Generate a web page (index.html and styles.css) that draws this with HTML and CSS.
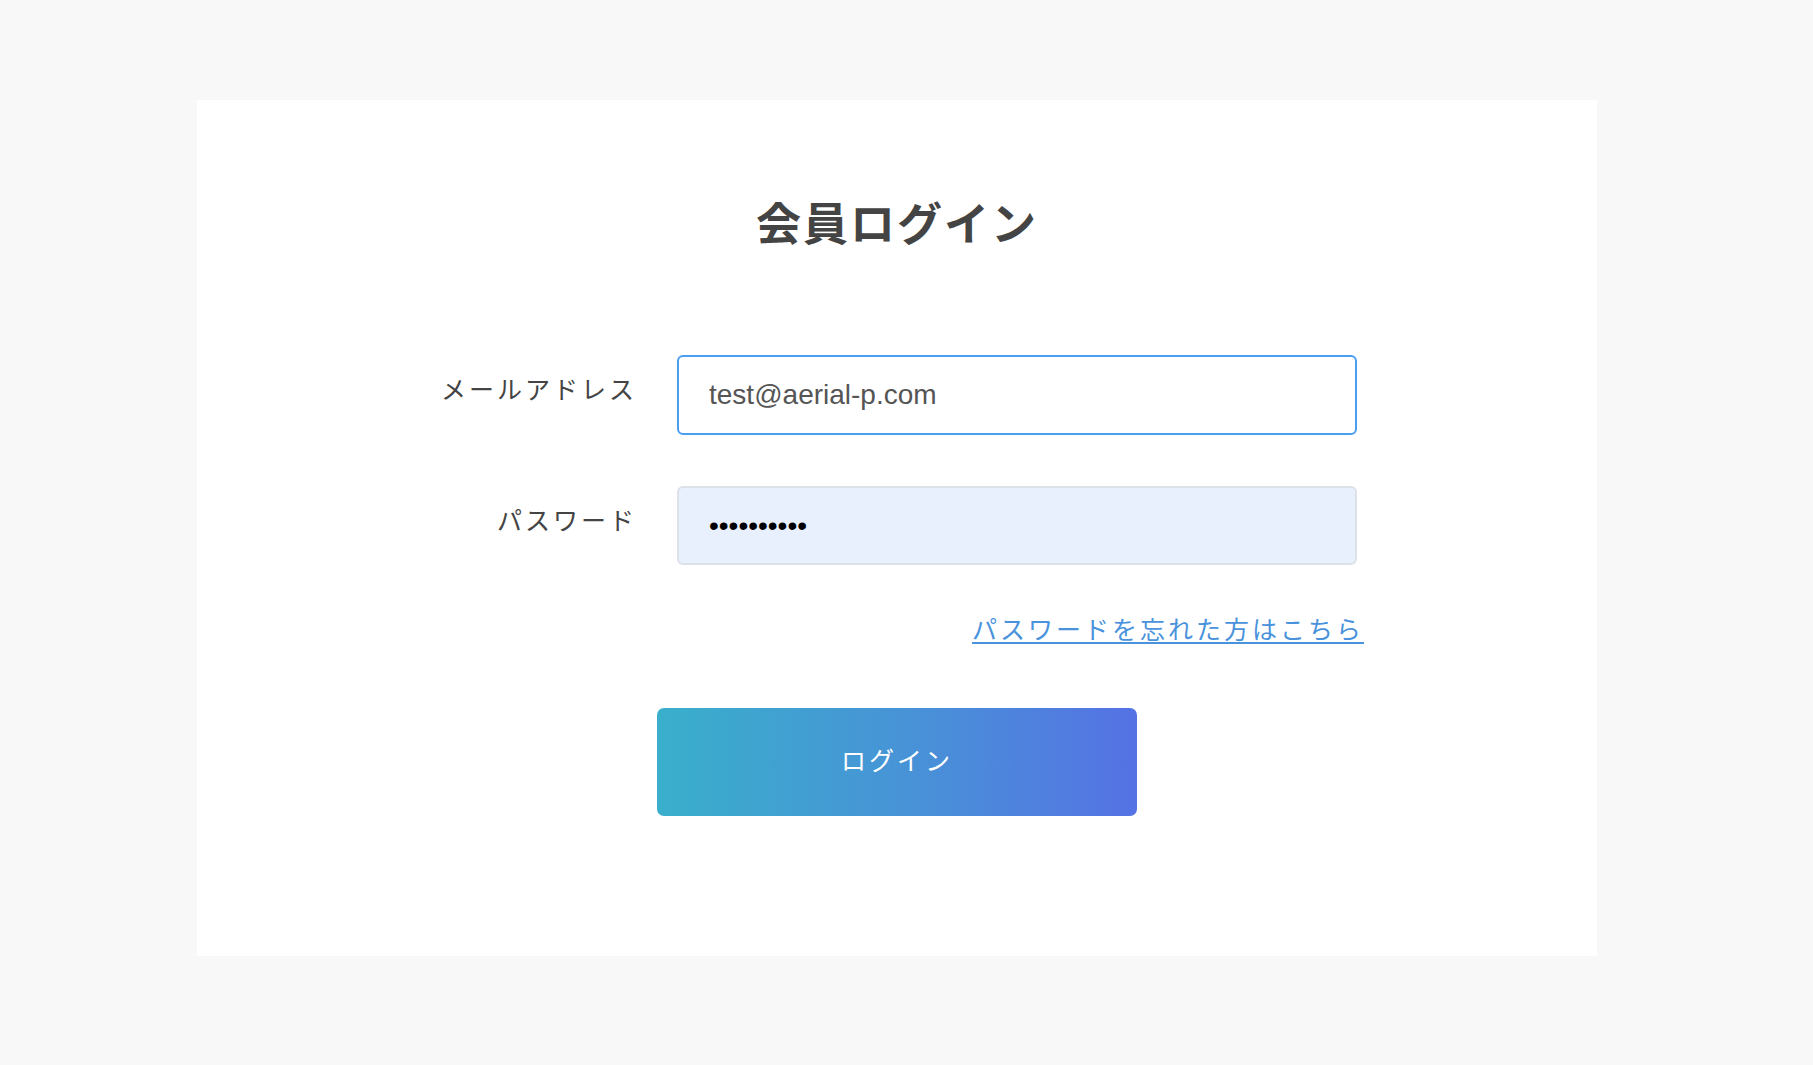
FILE: index.html
```html
<!DOCTYPE html>
<html lang="ja">
<head>
    <meta charset="UTF-8">
    <meta name="viewport" content="width=device-width, initial-scale=1.0">
    <link rel="stylesheet" href="styles.css">
    <title>会員ログイン</title>
</head>
<body>
    <div class="login-card">
        <h1 class="login-title">会員ログイン</h1>
        <form id="loginForm" class="login-form">
            <div class="form-fields">
                <div class="form-row">
                    <label for="email">メールアドレス</label>
                    <input type="email" id="email" class="field field-focus" value="test@aerial-p.com">
                </div>
                <div class="form-row">
                    <label for="password">パスワード</label>
                    <input type="password" id="password" class="field field-filled" value="0123456789">
                </div>
            </div>
            <div class="forgot">
                <a href="#">パスワードを忘れた方はこちら</a>
            </div>
            <div class="form-actions">
                <button type="submit">ログイン</button>
            </div>
        </form>
    </div>
</body>
</html>
```

FILE: styles.css
```css
body {
    font-family: "Liberation Sans", "Noto Sans CJK JP", sans-serif;
    background-color: #f8f8f8;
    margin: 0;
    padding: 100px 216px 109px 197px;
    display: flex;
    min-height: 100vh;
    box-sizing: border-box;
}

.login-card {
    flex: 1;
    background-color: #fff;
    padding: 91px 0 0;
}

.login-title {
    margin: 0;
    text-align: center;
    font-size: 45px;
    line-height: 69px;
    letter-spacing: 2px;
    font-weight: bold;
    color: #444;
}

.login-form {
    width: 920px;
    margin: 95px auto 0;
    display: flex;
    flex-direction: column;
}

.form-fields {
    display: flex;
    flex-direction: column;
    gap: 51px;
}

.form-row {
    display: flex;
    align-items: flex-start;
    gap: 40px;
}

.form-row label {
    width: 200px;
    flex: none;
    text-align: right;
    padding-top: 15px;
    font-size: 25px;
    line-height: 40px;
    letter-spacing: 3px;
    color: #444;
}

.field {
    flex: 1;
    height: 80px;
    box-sizing: border-box;
    padding: 0 30px;
    font-family: "Liberation Sans", sans-serif;
    font-size: 28px;
    border-radius: 6px;
    outline: none;
}

.field-focus {
    border: 2px solid #4a9ff5;
    color: #555;
    background-color: #fff;
}

.field-filled {
    height: 79px;
    border: 2px solid #dde2e8;
    color: #000;
    background-color: #e8f0fe;
}

.forgot {
    text-align: right;
    margin: 45px -7px 0 0;
    line-height: 40px;
}

.forgot a {
    font-size: 25px;
    letter-spacing: 3px;
    color: #4a93dc;
    text-decoration: underline;
    text-underline-offset: 3px;
    text-decoration-thickness: 2px;
}

.form-actions {
    display: flex;
    justify-content: center;
    margin-top: 54px;
}

button {
    width: 480px;
    height: 108px;
    border: none;
    border-radius: 7px;
    background: linear-gradient(90deg, #39afcb 0%, #4794d6 50%, #5572e4 100%);
    color: #fff;
    font-family: "Liberation Sans", "Noto Sans CJK JP", sans-serif;
    font-size: 25px;
    letter-spacing: 3px;
    padding-bottom: 8px;
    cursor: pointer;
}
```
